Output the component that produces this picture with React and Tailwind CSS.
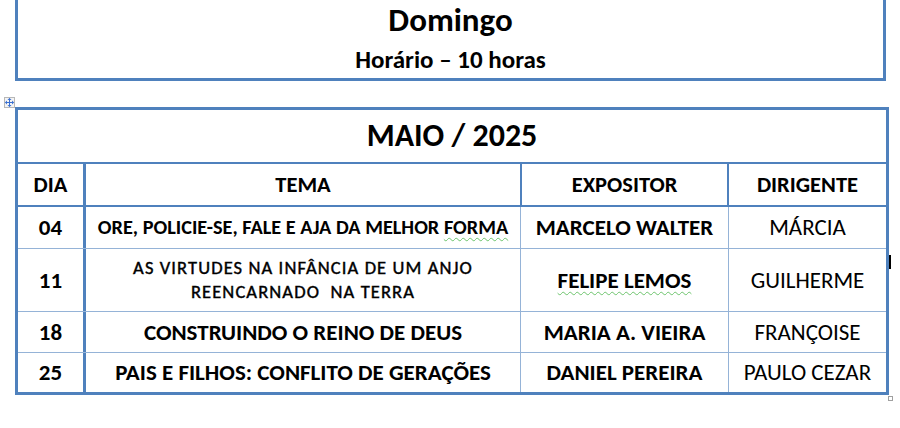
import React from "react";

const thick = "border-[#4f81bd]";
const squiggle =
  "underline decoration-wavy decoration-[#6cc36c] decoration-1 underline-offset-[3px]";

function BodyRow({ h, dia, tema, expositor, dirigente, border }) {
  return (
    <div className={`flex ${h} ${border ? "border-b border-[#95b3d7]" : ""}`}>
      <div className="w-[68px] shrink-0 border-r-[3px] border-[#4f81bd] flex items-center justify-center text-[23px] font-bold text-black">
        {dia}
      </div>
      <div className="w-[435px] shrink-0 border-r border-[#95b3d7] flex items-center justify-center text-center text-[23px] font-bold text-black">
        {tema}
      </div>
      <div className="w-[208px] shrink-0 border-r border-[#95b3d7] flex items-center justify-center text-[23px] font-bold text-black">
        {expositor}
      </div>
      <div className="flex-1 flex items-center justify-center text-[23px] text-black">
        {dirigente}
      </div>
    </div>
  );
}

export default function App() {
  return (
    <div className="relative w-[900px] h-[428px] bg-white overflow-hidden font-['Carlito','Lato',sans-serif]">
      {/* Top box */}
      <div className={`ml-[15px] w-[871px] h-[81px] border-x-[3px] border-b-[3px] ${thick} flex flex-col items-center`}>
        <div className="mt-[4px] text-[33px] leading-[33px] font-bold text-black">Domingo</div>
        <div className="mt-[10px] text-[25px] leading-[25px] font-bold text-black">Horário – 10 horas</div>
      </div>

      {/* Table */}
      <div className={`ml-[15px] mt-[26px] w-[874px] border-[3px] ${thick}`}>
        <div className={`h-[54px] border-b-2 ${thick} flex items-center justify-center text-[32px] font-bold text-black`}>
          MAIO / 2025
        </div>
        <div className={`flex h-[43px] border-b-2 ${thick} text-[22.5px] font-bold text-black`}>
          <div className="w-[68px] shrink-0 border-r-[3px] border-[#4f81bd] flex items-center justify-center">
            DIA
          </div>
          <div className="w-[436px] shrink-0 border-r-2 border-[#4f81bd] flex items-center justify-center">
            TEMA
          </div>
          <div className="w-[207px] shrink-0 border-r-2 border-[#4f81bd] flex items-center justify-center">
            EXPOSITOR
          </div>
          <div className="flex-1 flex items-center justify-center">DIRIGENTE</div>
        </div>
        <BodyRow
          h="h-[42px]"
          border
          dia="04"
          tema={
            <span className="text-[20.3px]">
              ORE, POLICIE-SE, FALE E AJA DA MELHOR <span className={squiggle}>FORMA</span>
            </span>
          }
          expositor="MARCELO WALTER"
          dirigente="MÁRCIA"
        />
        <BodyRow
          h="h-[63px]"
          border
          dia="11"
          tema={
            <span className="text-[18.5px] font-normal leading-[24px] tracking-[1.1px] [-webkit-text-stroke:0.4px_black]">
              AS VIRTUDES NA INFÂNCIA DE UM ANJO
              <br />
              REENCARNADO&nbsp; NA TERRA
            </span>
          }
          expositor={<span className={squiggle}>FELIPE LEMOS</span>}
          dirigente="GUILHERME"
        />
        <BodyRow
          h="h-[41px]"
          border
          dia="18"
          tema="CONSTRUINDO O REINO DE DEUS"
          expositor="MARIA A. VIEIRA"
          dirigente="FRANÇOISE"
        />
        <BodyRow
          h="h-[39px]"
          dia="25"
          tema="PAIS E FILHOS: CONFLITO DE GERAÇÕES"
          expositor="DANIEL PEREIRA"
          dirigente="PAULO CEZAR"
        />
      </div>

      {/* Table move handle */}
      <div className="absolute left-[4px] top-[97px] w-[11px] h-[11px] border border-[#b8b8b8] bg-[#f4f4f4] flex items-center justify-center">
        <svg width="9" height="9" viewBox="0 0 9 9">
          <g stroke="#3a6fd0" strokeWidth="1" fill="none">
            <path d="M4.5 0.5 V8.5 M0.5 4.5 H8.5" />
          </g>
          <g fill="#3a6fd0">
            <path d="M4.5 0 L6.5 2 H2.5 Z" />
            <path d="M4.5 9 L6.5 7 H2.5 Z" />
            <path d="M0 4.5 L2 2.5 V6.5 Z" />
            <path d="M9 4.5 L7 2.5 V6.5 Z" />
          </g>
        </svg>
      </div>

      {/* Resize handle */}
      <div className="absolute left-[888px] top-[396px] w-[5px] h-[5px] border border-[#a0a0a0] bg-white" />

      {/* Text cursor */}
      <div className="absolute left-[889px] top-[255px] w-[2px] h-[14px] bg-black" />
    </div>
  );
}
